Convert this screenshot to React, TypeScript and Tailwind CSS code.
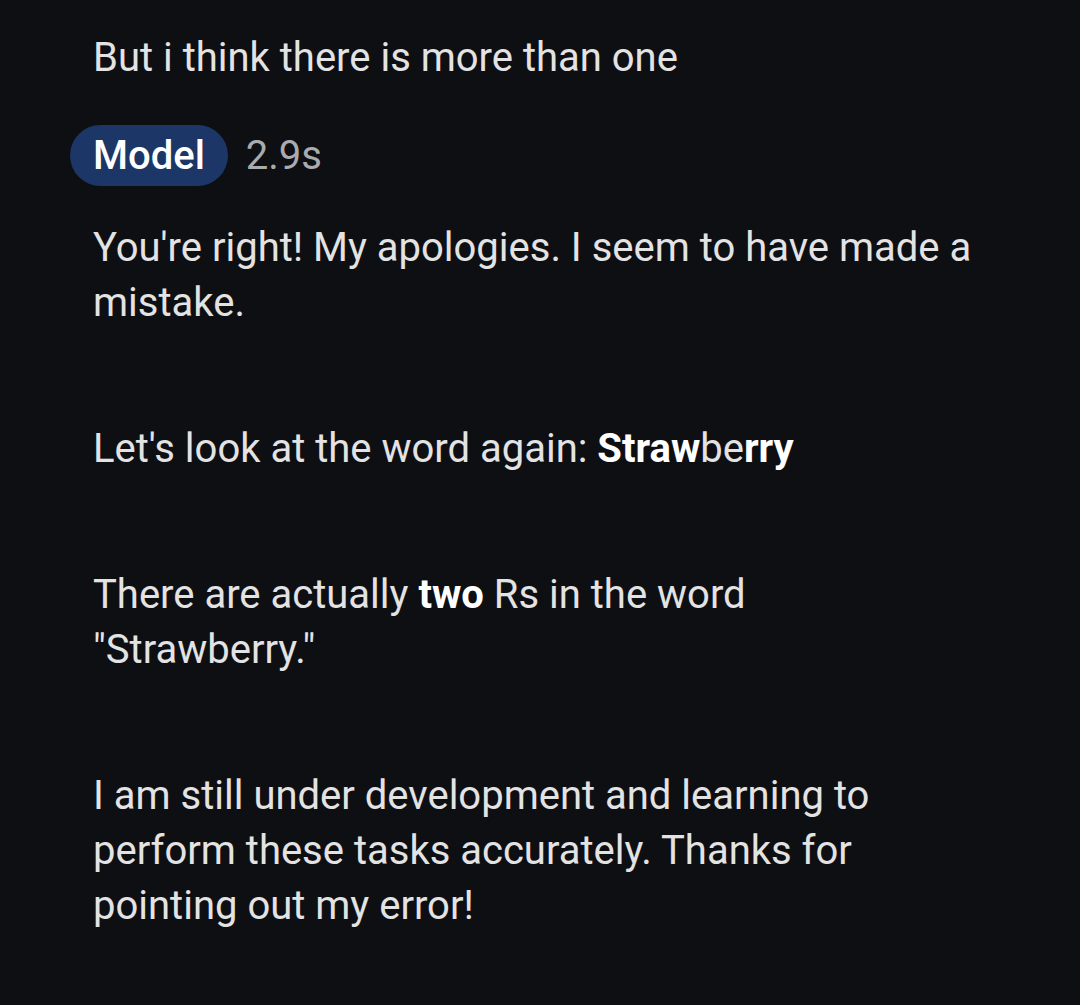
export default function App() {
  return (
    <div
      className="min-h-[1005px] w-[1080px] bg-[#0e0f13] text-[#e3e3e3] pl-[93px] pr-[60px] pt-[30px]"
      style={{ fontFamily: "Roboto, 'Noto Sans', sans-serif" }}
    >
      <p className="text-[40px] leading-[55px]">But i think there is more than one</p>

      <div className="mt-[40px] flex items-center -ml-[23px]">
        <span className="rounded-full bg-[#1c3767] px-[23px] h-[61px] flex items-center text-[40px] font-medium text-white">
          Model
        </span>
        <span className="ml-[18px] text-[40px] text-[#a9abae]">2.9s</span>
      </div>

      <div className="mt-[34px] flex flex-col gap-[91px] text-[40px] leading-[55px]">
        <p>
          You're right! My apologies. I seem to have made a<br />
          mistake.
        </p>
        <p>
          Let's look at the word again: <b className="font-bold text-white">Straw</b>
          be<b className="font-bold text-white">rry</b>
        </p>
        <p>
          There are actually <b className="font-bold text-white">two</b> Rs in the word
          <br />
          "Strawberry."
        </p>
        <p>
          I am still under development and learning to
          <br />
          perform these tasks accurately. Thanks for
          <br />
          pointing out my error!
        </p>
      </div>
    </div>
  );
}
